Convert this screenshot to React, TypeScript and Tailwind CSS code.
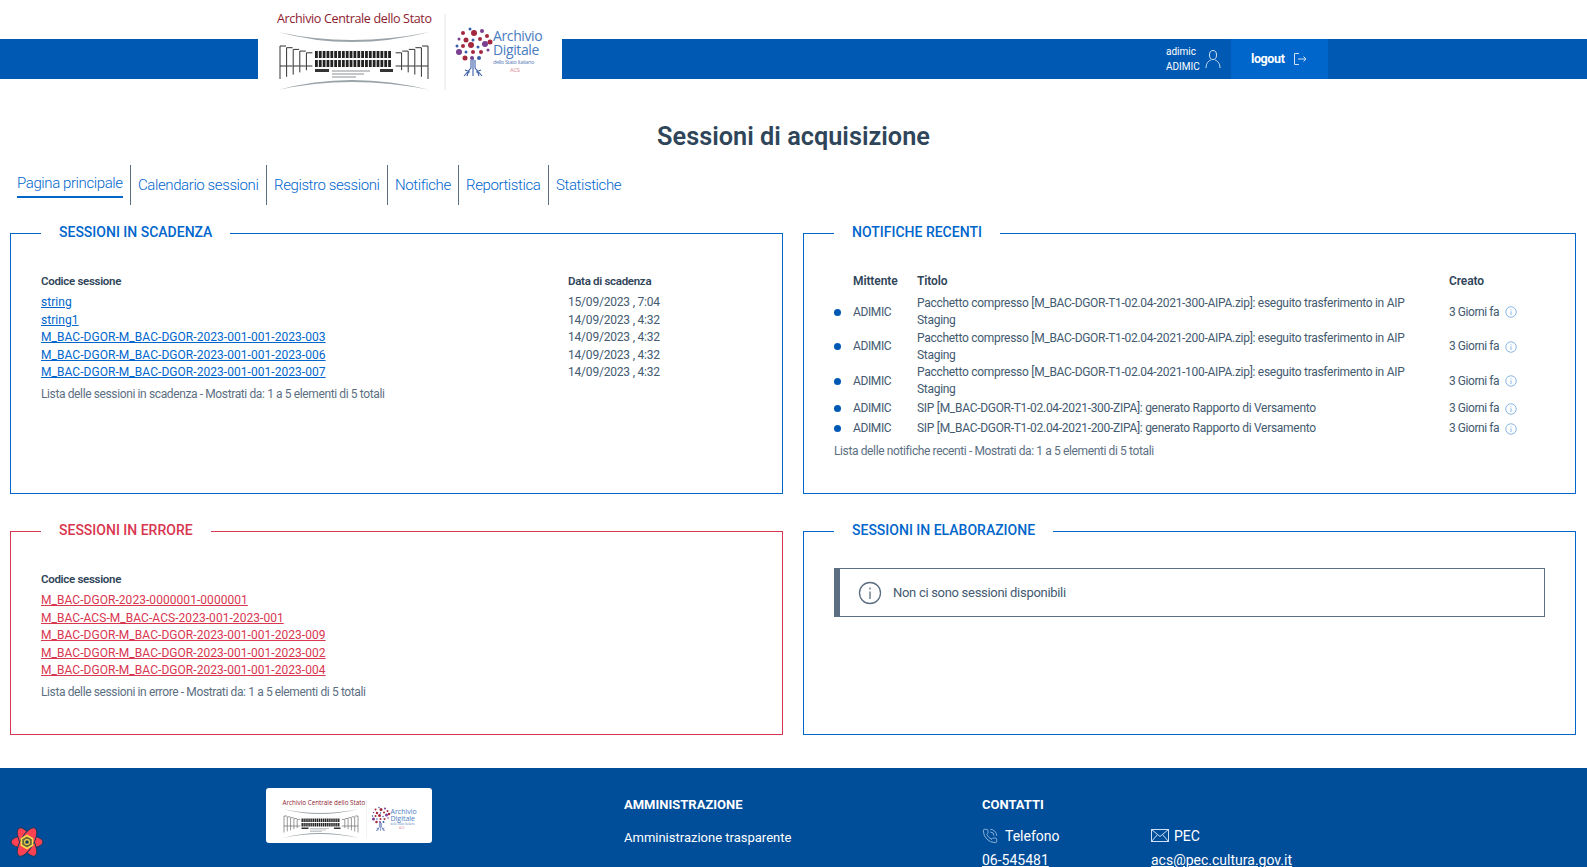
import React from 'react';
import { PhoneCall } from 'lucide-react';

const scadenza = [
    ['string', '15/09/2023 , 7:04'],
    ['string1', '14/09/2023 , 4:32'],
    ['M_BAC-DGOR-M_BAC-DGOR-2023-001-001-2023-003', '14/09/2023 , 4:32'],
    ['M_BAC-DGOR-M_BAC-DGOR-2023-001-001-2023-006', '14/09/2023 , 4:32'],
    ['M_BAC-DGOR-M_BAC-DGOR-2023-001-001-2023-007', '14/09/2023 , 4:32'],
];

const errori = [
    'M_BAC-DGOR-2023-0000001-0000001',
    'M_BAC-ACS-M_BAC-ACS-2023-001-2023-001',
    'M_BAC-DGOR-M_BAC-DGOR-2023-001-001-2023-009',
    'M_BAC-DGOR-M_BAC-DGOR-2023-001-001-2023-002',
    'M_BAC-DGOR-M_BAC-DGOR-2023-001-001-2023-004',
];

const notifiche = [
    'Pacchetto compresso [M_BAC-DGOR-T1-02.04-2021-300-AIPA.zip]: eseguito trasferimento in AIP Staging',
    'Pacchetto compresso [M_BAC-DGOR-T1-02.04-2021-200-AIPA.zip]: eseguito trasferimento in AIP Staging',
    'Pacchetto compresso [M_BAC-DGOR-T1-02.04-2021-100-AIPA.zip]: eseguito trasferimento in AIP Staging',
    'SIP [M_BAC-DGOR-T1-02.04-2021-300-ZIPA]: generato Rapporto di Versamento',
    'SIP [M_BAC-DGOR-T1-02.04-2021-200-ZIPA]: generato Rapporto di Versamento',
];

const tabs = [
    ['Pagina principale', 'w-[131px] pl-[17px]'],
    ['Calendario sessioni', 'w-[136px] pl-[7px]'],
    ['Registro sessioni', 'w-[121px] pl-[7px]'],
    ['Notifiche', 'w-[71px] pl-[7px]'],
    ['Reportistica', 'w-[90px] pl-[7px]'],
    ['Statistiche', 'pl-[7px]'],
];

const treeDots = [
    [205, 33, '#a3283f', 2], [212, 29, '#3a5ea8', 1.5], [216, 33, '#a3283f', 3], [224, 31, '#7a3f8f', 2], [229, 36, '#a3283f', 2],
    [201, 39, '#7a3f8f', 1.5], [208, 40, '#a3283f', 2.5], [215, 40, '#3a5ea8', 1.5], [222, 39, '#a3283f', 2], [232, 42, '#a3283f', 2.5],
    [199, 46, '#3a5ea8', 1.5], [205, 46, '#a3283f', 2], [213, 45, '#a3283f', 3], [220, 47, '#3a5ea8', 1.5], [227, 44, '#7a3f8f', 3],
    [201, 52, '#7a3f8f', 3], [208, 52, '#3a5ea8', 1.5], [215, 52, '#a3283f', 2], [223, 52, '#a3283f', 2], [230, 50, '#7a3f8f', 1.5],
    [207, 58, '#a3283f', 2.5], [214, 58, '#7a3f8f', 2], [221, 58, '#3a5ea8', 2],
] as const;

function Logo({ className }: { className: string }) {
    return (
        <svg viewBox="0 0 304 92" className={className}>
            <text x="19" y="23" fontSize="12.6" fill="#8d1c2f" className="font-['Open_Sans',sans-serif]">Archivio Centrale dello Stato</text>
            <path d="M20 32Q92 48 172 32Q92 52 20 32Z" fill="#9aa3a8" />
            <path d="M20 90Q92 70 172 90Q92 74 20 90Z" fill="#9aa3a8" />
            {[0, 1, 2, 3, 4].map((i) => (
                <g key={i} stroke="#333" strokeWidth="1" fill="none">
                    <path d={`M${22 + i * 6.6} ${79 - i * 2.2}V${46 + i * 1.7}H${28 + i * 6.6}M${22 + i * 6.6} 66H${28 + i * 6.6}`} />
                    <path d={`M${170 - i * 6.6} ${79 - i * 2.2}V${46 + i * 1.7}H${164 - i * 6.6}M${170 - i * 6.6} 66H${164 - i * 6.6}`} />
                </g>
            ))}
            {[51, 60].map((y) =>
                Array.from({ length: 20 }).map((_, i) => (
                    <rect key={`${y}-${i}`} x={57 + i * 3.85} y={y} width="2.8" height="7" fill="#222" />
                ))
            )}
            <rect x="57" y="69" width="14" height="3" fill="#333" />
            <rect x="122" y="69" width="13" height="3" fill="#333" />
            <path d="M74 71H112M74 74H106M74 77H98" stroke="#8a8f93" strokeWidth="1" />
            <path d="M187 14V90" stroke="#e4e6e8" strokeWidth="1" />
            {treeDots.map(([x, y, c, r], i) => (
                <circle key={i} cx={x} cy={y} r={r} fill={c} />
            ))}
            <path d="M215 58V66M213 60V68L206 76M217 60V68L224 76M215 66V76M211 70L209 76M219 70L221 76M207 70L212 72M223 70L218 72" stroke="#3a5ea8" strokeWidth="1.1" fill="none" />
            <text x="235" y="41" fontSize="14" fill="#4a7cc0" className="font-['Open_Sans',sans-serif]">Archivio</text>
            <text x="235" y="55" fontSize="14" fill="#4a7cc0" className="font-['Open_Sans',sans-serif]">Digitale</text>
            <text x="235" y="64" fontSize="5.6" fill="#5b7fb8" className="font-['Open_Sans',sans-serif]">dello Stato Italiano</text>
            <text x="252" y="72" fontSize="6" fill="#d88b96" className="font-['Open_Sans',sans-serif]">ACS</text>
        </svg>
    );
}

function InfoIcon({ className }: { className: string }) {
    return (
        <svg viewBox="0 0 24 24" fill="none" stroke="currentColor" strokeWidth="1.3" className={className}>
            <circle cx="12" cy="12" r="10.5" />
            <path d="M12 10.5V18M12 6.5V8.5" />
        </svg>
    );
}

function Panel({ title, error, height, children }: { title: string; error?: boolean; height: string; children: React.ReactNode }) {
    return (
        <div className={`relative border ${height} ${error ? 'border-[#d9364f]' : 'border-[#0066cc]'}`}>
            <div className={`absolute -top-[12px] left-[30px] bg-white px-[18px] text-[14px] leading-[20px] font-medium tracking-normal ${error ? 'text-[#d9364f]' : 'text-[#0066cc]'}`}>
                {title}
            </div>
            {children}
        </div>
    );
}

export default function App() {
    return (
        <div className="h-[867px] overflow-hidden bg-white font-['Roboto',sans-serif] text-[12px] tracking-[-0.38px] text-[#435a70]">
            <header className="pt-[39px] h-[79px]">
                <div className="flex h-[40px] bg-[#0059b3] text-white">
                    <div className="w-[258px]" />
                    <div className="w-[304px] h-[92px] -mt-[39px] bg-white">
                        <Logo className="w-[304px] h-[92px]" />
                    </div>
                    <div className="flex-1 flex justify-end pr-[259px]">
                        <div className="flex items-center pr-[10px]">
                            <div className="text-[10px] leading-[15px] w-[39px] tracking-normal">
                                <div>adimic</div>
                                <div>ADIMIC</div>
                            </div>
                            <svg viewBox="0 0 16 20" fill="none" stroke="#cfe0f3" strokeWidth="1" className="w-[16px] h-[20px]">
                                <ellipse cx="8" cy="6" rx="3.5" ry="4.5" />
                                <path d="M1 19C1 14 4 11.5 6 11M15 19C15 14 12 11.5 10 11" />
                            </svg>
                        </div>
                        <div className="flex items-center w-[97px] pl-[20px] bg-[#0066cc]">
                            <span className="text-[12.5px] font-bold">logout</span>
                            <svg viewBox="0 0 14 14" fill="none" stroke="#cfe0f3" strokeWidth="1" className="ml-[8px] w-[14px] h-[14px]">
                                <path d="M6 1.5H1.5V12.5H6M5 7H13M10.5 4.5L13 7L10.5 9.5" />
                            </svg>
                        </div>
                    </div>
                </div>
            </header>

            <h1 className="mt-[41px] text-center text-[25.3px] leading-[34px] font-semibold tracking-normal text-[#2f4559]">Sessioni di acquisizione</h1>

            <nav className="flex mt-[11px] h-[40px] text-[15px] font-light tracking-[-0.4px] whitespace-nowrap text-[#0066cc]">
                {tabs.map(([label, cls], i) => (
                    <div key={label} className={`flex items-center ${cls} ${i < 5 ? 'border-r border-[#5c6f82]' : ''}`}>
                        <span className={i === 0 ? 'border-b-2 border-[#0066cc] pb-[1px]' : ''}>{label}</span>
                    </div>
                ))}
            </nav>

            <main className="mt-[28px] pl-[10px] pr-[11px] grid grid-cols-2 gap-x-[20px] gap-y-[37px]">
                <Panel title="SESSIONI IN SCADENZA" height="h-[261px]">
                    <div className="pl-[30px] pt-[39px]">
                        <div className="flex font-semibold h-[20px] text-[11.5px] tracking-[-0.3px] text-[#2f4559]">
                            <div className="w-[527px]">Codice sessione</div>
                            <div>Data di scadenza</div>
                        </div>
                        <div className="mt-[1px]">
                            {scadenza.map(([code, date]) => (
                                <div key={code} className="flex h-[17.5px] leading-[17.5px]">
                                    <div className="w-[527px] text-[#0066cc] underline tracking-[0.05px]">{code}</div>
                                    <div className="tracking-[-0.2px]">{date}</div>
                                </div>
                            ))}
                        </div>
                        <div className="mt-[3.5px] text-[#5c6f82]">Lista delle sessioni in scadenza - Mostrati da: 1 a 5 elementi di 5 totali</div>
                    </div>
                </Panel>

                <Panel title="NOTIFICHE RECENTI" height="h-[261px]">
                    <div className="pl-[30px] pt-[38px]">
                        <div className="flex font-semibold h-[20px] tracking-[-0.1px] text-[#2f4559]">
                            <div className="w-[19px]" />
                            <div className="w-[64px]">Mittente</div>
                            <div className="w-[532px]">Titolo</div>
                            <div>Creato</div>
                        </div>
                        <div className="mt-[3px]">
                            {notifiche.map((n) => (
                                <div key={n} className="flex items-center min-h-[20px] leading-[17.25px]">
                                    <div className="w-[19px]"><div className="w-[7px] h-[7px] rounded-full bg-[#0059b3]" /></div>
                                    <div className="w-[64px]">ADIMIC</div>
                                    <div className="w-[532px] pr-[20px] tracking-[-0.29px]">{n}</div>
                                    <div className="w-[56px] tracking-[-0.45px]">3 Giorni fa</div>
                                    <InfoIcon className="w-[12px] h-[12px] text-[#4a90d9]" />
                                </div>
                            ))}
                        </div>
                        <div className="mt-[3px] text-[#5c6f82]">Lista delle notifiche recenti - Mostrati da: 1 a 5 elementi di 5 totali</div>
                    </div>
                </Panel>

                <Panel title="SESSIONI IN ERRORE" error height="h-[204px]">
                    <div className="pl-[30px] pt-[39px]">
                        <div className="font-semibold h-[20px] text-[11.5px] tracking-[-0.3px] text-[#2f4559]">Codice sessione</div>
                        <div className="mt-[1px]">
                            {errori.map((code) => (
                                <div key={code} className="h-[17.5px] leading-[17.5px] text-[#d9364f] underline tracking-[0.05px]">{code}</div>
                            ))}
                        </div>
                        <div className="mt-[3.5px] text-[#5c6f82]">Lista delle sessioni in errore - Mostrati da: 1 a 5 elementi di 5 totali</div>
                    </div>
                </Panel>

                <Panel title="SESSIONI IN ELABORAZIONE" height="h-[204px]">
                    <div className="px-[30px] pt-[36px]">
                        <div className="flex items-center h-[49px] w-[711px] border border-l-[6px] border-[#5c6f82] pl-[18px]">
                            <InfoIcon className="w-[24px] h-[24px] text-[#5c6f82]" />
                            <span className="ml-[11px] mt-[1px] text-[13px] tracking-[-0.3px]">Non ci sono sessioni disponibili</span>
                        </div>
                    </div>
                </Panel>
            </main>

            <footer className="relative mt-[33px] h-[100px] bg-[#004d99] text-white flex tracking-normal">
                <div className="w-[266px]" />
                <div className="w-[358px] pt-[20px]">
                    <div className="w-[166px] h-[55px] bg-white rounded-[3px] flex items-center justify-center">
                        <Logo className="w-[152px] h-[46px]" />
                    </div>
                </div>
                <div className="w-[358px] pt-[28px]">
                    <div className="text-[13px] font-bold leading-[18px]">AMMINISTRAZIONE</div>
                    <div className="mt-[15px] text-[13px] leading-[18px]">Amministrazione trasparente</div>
                </div>
                <div className="pt-[28px]">
                    <div className="text-[13px] font-bold leading-[18px]">CONTATTI</div>
                    <div className="flex mt-[11px] text-[14px] leading-[22px]">
                        <div className="w-[169px]">
                            <div className="flex items-center gap-[7px]">
                                <PhoneCall className="w-[16px] h-[16px] text-[#cfe0f3]" strokeWidth={1} />
                                <span>Telefono</span>
                            </div>
                            <div className="mt-[2px] underline">06-545481</div>
                        </div>
                        <div>
                            <div className="flex items-center gap-[5px]">
                                <svg viewBox="0 0 18 13" fill="none" stroke="#cfe0f3" strokeWidth="1" className="w-[18px] h-[13px] -mt-[2px]">
                                    <rect x="0.5" y="0.5" width="17" height="12" />
                                    <path d="M0.5 0.5L9 7.5L17.5 0.5M0.5 12.5L6.5 5.5M17.5 12.5L11.5 5.5" />
                                </svg>
                                <span>PEC</span>
                            </div>
                            <div className="mt-[2px] underline">acs@pec.cultura.gov.it</div>
                        </div>
                    </div>
                </div>
                <svg viewBox="0 0 34 30" className="absolute left-[10px] top-[59px] w-[34px] h-[30px]">
                    <g fill="#ff4154" stroke="#163c5a" strokeWidth="1">
                        <ellipse cx="17" cy="15" rx="16" ry="6.5" />
                        <ellipse cx="17" cy="15" rx="16" ry="6.5" transform="rotate(60 17 15)" />
                        <ellipse cx="17" cy="15" rx="16" ry="6.5" transform="rotate(120 17 15)" />
                    </g>
                    <path d="M17 8.5L22.6 11.75V18.25L17 21.5L11.4 18.25V11.75Z" fill="#6b6a3a" stroke="#ffd94c" strokeWidth="1.6" />
                    <circle cx="17" cy="15" r="2.4" fill="#163c5a" stroke="#ffd94c" strokeWidth="1.1" />
                </svg>
            </footer>
        </div>
    );
}
